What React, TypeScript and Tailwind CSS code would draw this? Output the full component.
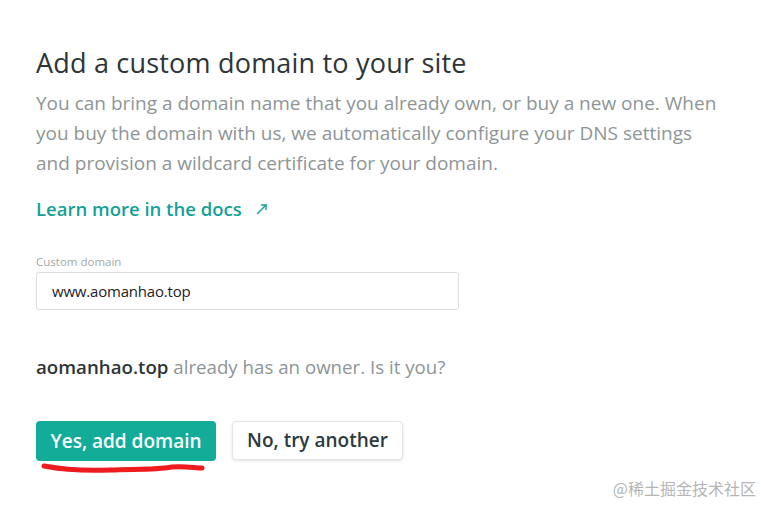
import React from 'react';

export default function App() {
  return (
    <div className="w-[761px] h-[505px] bg-white relative overflow-hidden font-['Open_Sans','Noto_Sans',sans-serif]">
      <div className="pl-[36px] pt-[45px] pr-[30px]">
        <h1 className="text-[27px] leading-[36px] text-[#2e3438] font-medium tracking-[0.2px]">Add a custom domain to your site</h1>
        <p className="mt-[7px] text-[19px] leading-[30px] text-[#8e9597]">
          You can bring a domain name that you already own, or buy a new one. When<br />
          you buy the domain with us, we automatically configure your DNS settings<br />
          and provision a wildcard certificate for your domain.
        </p>

        <a className="mt-[16px] flex items-center gap-[14px] text-[18.5px] leading-[30px] font-semibold text-[#15a195]">
          Learn more in the docs
          <svg width="12" height="12" viewBox="0 0 12 12" fill="none" stroke="#15a195" strokeWidth="1.4" strokeLinecap="round">
            <path d="M1.5 10.5 L10 2" />
            <path d="M5.5 2 H10 V6.5" />
          </svg>
        </a>

        <div className="mt-[31px]">
          <label className="block text-[11.5px] leading-[14px] text-[#a3a8aa]">Custom domain</label>
          <div className="mt-[3px] w-[423px] h-[38px] border border-[#dcdfe0] rounded-[3px] flex items-center px-[15px] text-[15px] text-[#1e2326] tracking-[-0.2px]">
            www.aomanhao.top
          </div>
        </div>

        <p className="mt-[42px] text-[18.7px] leading-[30px] text-[#8e9597]">
          <span className="text-[#2e3438] font-semibold">aomanhao.top</span> already has an owner. Is it you?
        </p>

        <div className="mt-[39px] flex gap-[16px]">
          <div className="relative">
            <button className="h-[40px] w-[180px] rounded-[4px] bg-[#12ac99] text-white text-[19px] font-semibold">Yes, add domain</button>
            <svg className="absolute left-[4px] top-[40px]" width="166" height="14" viewBox="0 0 166 14" fill="none">
              <path d="M4 5 C25 9, 45 10, 70 9 C95 8, 115 9, 132 6 C145 5, 155 7, 162 7" stroke="#ee1c1c" strokeWidth="5" strokeLinecap="round" />
            </svg>
          </div>
          <button className="h-[39px] w-[171px] rounded-[4px] bg-white border border-[#e3e5e6] shadow-[0_1px_3px_rgba(0,0,0,0.12)] text-[#2d3940] text-[19px] font-semibold">No, try another</button>
        </div>
      </div>

      <div className="absolute right-[5px] bottom-[5px] text-[16px] text-[#b5b5b5] font-['Noto_Sans_CJK_SC',sans-serif]">
        @稀土掘金技术社区
      </div>
    </div>
  );
}
